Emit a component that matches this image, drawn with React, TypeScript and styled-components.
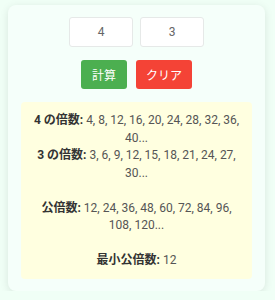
import React, { useState } from 'react'
import styled, { createGlobalStyle } from 'styled-components'

const GlobalStyle = createGlobalStyle`
  body {
    margin: 0;
    background: #f0fff6;
    font-family: Roboto, "Noto Sans CJK JP", sans-serif;
  }
`

const Card = styled.div`
  margin: 5px 10px 0 8px;
  padding: 12px 13px;
  background: #f5fffa;
  border-radius: 8px;
  box-shadow: 0 2px 8px rgba(0, 0, 0, 0.1);
`

const InputRow = styled.div`
  display: flex;
  justify-content: center;
  gap: 7px;
`

const NumberInput = styled.input`
  box-sizing: border-box;
  width: 64px;
  height: 30px;
  border: 1px solid #e6e9e8;
  border-radius: 3px;
  background: #fff;
  text-align: center;
  font-family: Roboto, "Noto Sans CJK JP", sans-serif;
  font-size: 12px;
  color: #666;
  outline: none;
`

const ButtonRow = styled.div`
  display: flex;
  justify-content: center;
  gap: 9px;
  margin-top: 13px;
`

const Button = styled.button<{ $color: string; $width: number }>`
  width: ${(p) => p.$width}px;
  height: 29px;
  border: none;
  border-radius: 3px;
  background: ${(p) => p.$color};
  color: #fff;
  font-family: Roboto, "Noto Sans CJK JP", sans-serif;
  font-size: 12px;
  padding: 0;
  cursor: pointer;
`

const Result = styled.div`
  margin-top: 13px;
  padding: 10px 10px 9px;
  background: #ffffe0;
  border-radius: 4px;
  text-align: center;
  font-size: 12px;
  line-height: 17.5px;
  color: #555;
`

const Label = styled.strong`
  font-weight: 700;
  color: #333;
`

const multiples = (n: number, count: number) =>
  Array.from({ length: count }, (_, i) => n * (i + 1))

const gcd = (a: number, b: number): number => (b === 0 ? a : gcd(b, a % b))

const App: React.FC = () => {
  const [a, setA] = useState('4')
  const [b, setB] = useState('3')

  const x = Number(a)
  const y = Number(b)
  const lcm = (x * y) / gcd(x, y)

  return (
    <>
      <GlobalStyle />
      <Card>
        <InputRow>
          <NumberInput value={a} onChange={(e) => setA(e.target.value)} />
          <NumberInput value={b} onChange={(e) => setB(e.target.value)} />
        </InputRow>
        <ButtonRow>
          <Button $color="#4caf50" $width={46}>計算</Button>
          <Button
            $color="#f44336"
            $width={56}
            onClick={() => {
              setA('')
              setB('')
            }}
          >
            クリア
          </Button>
        </ButtonRow>
        <Result>
          <Label>{x} の倍数:</Label> {multiples(x, 10).join(', ')}...
          <br />
          <Label>{y} の倍数:</Label> {multiples(y, 10).join(', ')}...
          <br />
          <br />
          <Label>公倍数:</Label> {multiples(lcm, 10).join(', ')}...
          <br />
          <br />
          <Label>最小公倍数:</Label> {lcm}
        </Result>
      </Card>
    </>
  )
}

export default App
